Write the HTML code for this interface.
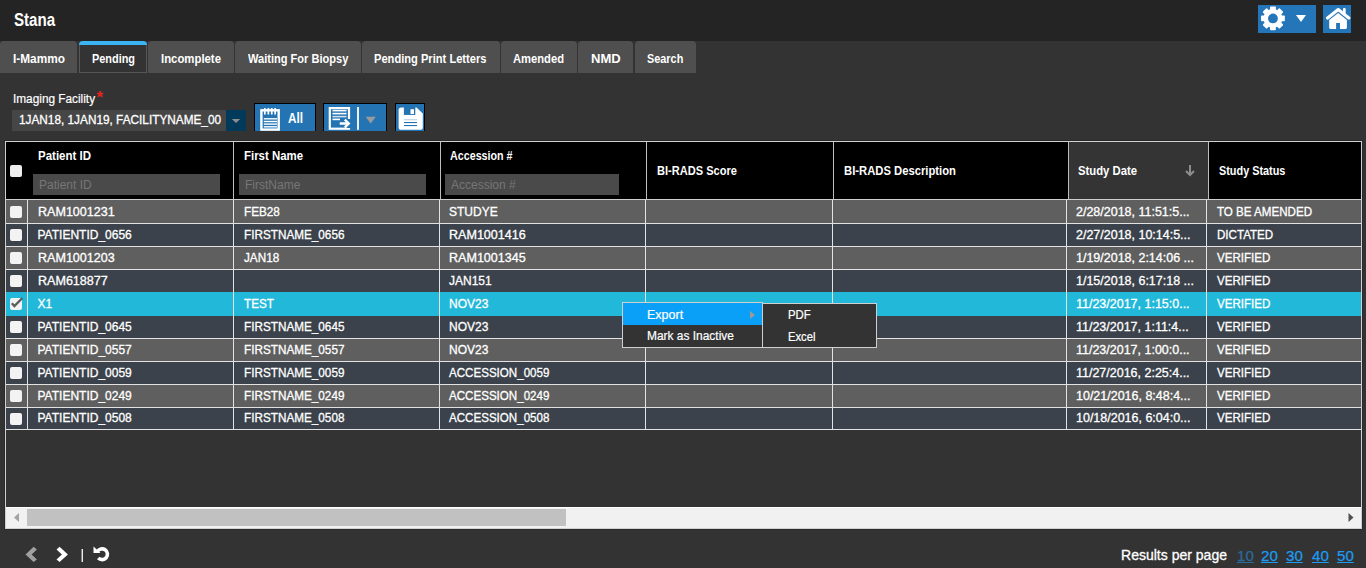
<!DOCTYPE html>
<html><head><meta charset="utf-8"><style>
html,body{margin:0;padding:0;}
body{width:1366px;height:568px;overflow:hidden;position:relative;background:#333;font-family:"Liberation Sans", sans-serif;}
</style></head><body>
<div style="position:absolute;left:0px;top:0px;width:1366px;height:41px;background:#242424;"></div>
<div style="position:absolute;left:14px;top:11.05px;font-size:18px;line-height:18px;font-weight:bold;color:#fff;white-space:nowrap;letter-spacing:0px;transform:scaleX(0.84);transform-origin:0 0;">Stana</div>
<div style="position:absolute;left:1258px;top:5px;width:58px;height:28px;background:#2576b8;"></div>
<svg style="position:absolute;left:1258px;top:5px" width="58" height="28" viewBox="0 0 58 28">
<g transform="translate(14.95,13.45)" fill="#fff">
<circle r="9.4"/><rect x="-2.9" y="-11.9" width="5.8" height="5" rx="0.8" transform="rotate(0)"/><rect x="-2.9" y="-11.9" width="5.8" height="5" rx="0.8" transform="rotate(45)"/><rect x="-2.9" y="-11.9" width="5.8" height="5" rx="0.8" transform="rotate(90)"/><rect x="-2.9" y="-11.9" width="5.8" height="5" rx="0.8" transform="rotate(135)"/><rect x="-2.9" y="-11.9" width="5.8" height="5" rx="0.8" transform="rotate(180)"/><rect x="-2.9" y="-11.9" width="5.8" height="5" rx="0.8" transform="rotate(225)"/><rect x="-2.9" y="-11.9" width="5.8" height="5" rx="0.8" transform="rotate(270)"/><rect x="-2.9" y="-11.9" width="5.8" height="5" rx="0.8" transform="rotate(315)"/>
<circle r="4.9" fill="#2576b8"/>
</g>
<path d="M38,10 h10 l-5,7 z" fill="#fff"/>
</svg>
<div style="position:absolute;left:1323px;top:5px;width:28px;height:28px;background:#2576b8;"></div>
<svg style="position:absolute;left:1323px;top:5px" width="28" height="28" viewBox="0 0 28 28">
<path d="M4.6,13 L15.2,4.6 L25.8,13" fill="none" stroke="#fff" stroke-width="3.2" stroke-linecap="round" stroke-linejoin="round"/>
<rect x="20" y="3" width="2.7" height="6" rx="1" fill="#fff"/>
<path d="M6.2,15 L15.2,7.9 L23.9,15 V22.6 A1.5,1.5 0 0 1 22.4,24.1 H17 V18 H13.1 V24.1 H7.7 A1.5,1.5 0 0 1 6.2,22.6 Z" fill="#fff"/>
</svg>
<div style="position:absolute;left:0px;top:41px;width:77px;height:32px;background:#4f4f4f;border-radius:4px 4px 0 0;"></div>
<div style="position:absolute;left:13px;top:51.99px;font-size:13.5px;line-height:13.5px;font-weight:bold;color:#fff;white-space:nowrap;letter-spacing:0px;transform:scaleX(0.8774);transform-origin:0 0;">I-Mammo</div>
<div style="position:absolute;left:79px;top:41px;width:68px;height:32px;background:#333;box-sizing:border-box;border:1px solid #575757;border-top:none;border-radius:4px 4px 0 0;"></div>
<div style="position:absolute;left:79px;top:41px;width:68px;height:4px;background:#3ab4f2;border-radius:4px 4px 0 0;"></div>
<div style="position:absolute;left:91.7px;top:51.99px;font-size:13.5px;line-height:13.5px;font-weight:bold;color:#fff;white-space:nowrap;letter-spacing:0px;transform:scaleX(0.8073);transform-origin:0 0;">Pending</div>
<div style="position:absolute;left:148px;top:41px;width:86px;height:32px;background:#4f4f4f;border-radius:4px 4px 0 0;"></div>
<div style="position:absolute;left:160.7px;top:51.99px;font-size:13.5px;line-height:13.5px;font-weight:bold;color:#fff;white-space:nowrap;letter-spacing:0px;transform:scaleX(0.8416);transform-origin:0 0;">Incomplete</div>
<div style="position:absolute;left:235px;top:41px;width:126px;height:32px;background:#4f4f4f;border-radius:4px 4px 0 0;"></div>
<div style="position:absolute;left:247.6px;top:51.99px;font-size:13.5px;line-height:13.5px;font-weight:bold;color:#fff;white-space:nowrap;letter-spacing:0px;transform:scaleX(0.8194);transform-origin:0 0;">Waiting For Biopsy</div>
<div style="position:absolute;left:362px;top:41px;width:138px;height:32px;background:#4f4f4f;border-radius:4px 4px 0 0;"></div>
<div style="position:absolute;left:374.3px;top:51.99px;font-size:13.5px;line-height:13.5px;font-weight:bold;color:#fff;white-space:nowrap;letter-spacing:0px;transform:scaleX(0.8238);transform-origin:0 0;">Pending Print Letters</div>
<div style="position:absolute;left:501px;top:41px;width:76px;height:32px;background:#4f4f4f;border-radius:4px 4px 0 0;"></div>
<div style="position:absolute;left:513px;top:51.99px;font-size:13.5px;line-height:13.5px;font-weight:bold;color:#fff;white-space:nowrap;letter-spacing:0px;transform:scaleX(0.8288);transform-origin:0 0;">Amended</div>
<div style="position:absolute;left:578px;top:41px;width:55px;height:32px;background:#4f4f4f;border-radius:4px 4px 0 0;"></div>
<div style="position:absolute;left:590.5px;top:51.99px;font-size:13.5px;line-height:13.5px;font-weight:bold;color:#fff;white-space:nowrap;letter-spacing:0px;transform:scaleX(0.9659);transform-origin:0 0;">NMD</div>
<div style="position:absolute;left:635px;top:41px;width:61px;height:32px;background:#4f4f4f;border-radius:4px 4px 0 0;"></div>
<div style="position:absolute;left:647px;top:51.99px;font-size:13.5px;line-height:13.5px;font-weight:bold;color:#fff;white-space:nowrap;letter-spacing:0px;transform:scaleX(0.8058);transform-origin:0 0;">Search</div>
<div style="position:absolute;left:13px;top:92.62px;font-size:12.5px;line-height:12.5px;font-weight:normal;color:#fff;white-space:nowrap;letter-spacing:0px;transform:scaleX(0.945);transform-origin:0 0;-webkit-text-stroke:0.2px #fff;">Imaging Facility</div>
<div style="position:absolute;left:96.5px;top:88.88px;font-size:17px;line-height:17px;font-weight:bold;color:#e8241c;white-space:nowrap;letter-spacing:0px;">*</div>
<div style="position:absolute;left:12px;top:110px;width:214px;height:21px;background:#464646;"></div>
<div style="position:absolute;left:19px;top:114.43px;font-size:12px;line-height:12px;font-weight:normal;color:#fff;white-space:nowrap;letter-spacing:0px;transform:scaleX(0.9836);transform-origin:0 0;-webkit-text-stroke:0.3px #fff;">1JAN18, 1JAN19, FACILITYNAME_00</div>
<div style="position:absolute;left:226px;top:110px;width:20px;height:21px;background:#013a5a;"></div>
<svg style="position:absolute;left:226px;top:110px" width="20" height="21"><path d="M5.8,9 h8.4 l-4.2,4 z" fill="#8e8e8e"/></svg>
<div style="position:absolute;left:254px;top:103px;width:62px;height:28px;background:#2473b2;box-sizing:border-box;border:1px solid #000;border-bottom:none;"></div>
<svg style="position:absolute;left:254px;top:103px" width="62" height="28">
<rect x="7.4" y="7.3" width="17.3" height="19.3" fill="none" stroke="#fff" stroke-width="2.4"/>
<g fill="#fff"><rect x="10" y="5" width="1.7" height="6.5"/><rect x="13.5" y="5" width="1.7" height="6.5"/><rect x="16.9" y="5" width="1.7" height="6.5"/><rect x="20.3" y="5" width="1.7" height="6.5"/>
<rect x="9.8" y="15.1" width="13.2" height="1.4"/><rect x="9.8" y="17.8" width="13.2" height="1.4"/><rect x="9.8" y="20.4" width="13.2" height="1.4"/><rect x="9.8" y="23.1" width="13.2" height="1.4"/></g>
</svg>
<div style="position:absolute;left:288px;top:110.97px;font-size:14px;line-height:14px;font-weight:bold;color:#fff;white-space:nowrap;letter-spacing:0px;transform:scaleX(0.84);transform-origin:0 0;">All</div>
<div style="position:absolute;left:323px;top:103px;width:64px;height:28px;background:#2473b2;box-sizing:border-box;border:1px solid #000;border-bottom:none;"></div>
<svg style="position:absolute;left:323px;top:103px" width="64" height="28">
<rect x="6.8" y="5.1" width="19.2" height="20.6" fill="none" stroke="#fff" stroke-width="2.2"/>
<g fill="#fff"><rect x="9.5" y="6.8" width="14" height="1.6"/><rect x="9.5" y="9.8" width="14" height="1.6"/><rect x="9.5" y="12.8" width="14" height="1.6" fill="#cfe0ee"/><rect x="9.5" y="15.6" width="7.5" height="1.6"/></g>
<rect x="24" y="16" width="4" height="9" fill="#2473b2"/>
<path d="M16.7,20.5 h8.5 M21.8,16.6 l4,3.9 -4,3.9" fill="none" stroke="#fff" stroke-width="2.3"/>
<rect x="34.1" y="4" width="1.8" height="22.8" fill="#fff"/>
<path d="M42.6,13.8 h10.2 l-5.1,6.6 z" fill="#9a9a9a"/>
</svg>
<div style="position:absolute;left:395px;top:103px;width:30px;height:28px;background:#2473b2;box-sizing:border-box;border:1px solid #000;border-bottom:none;"></div>
<svg style="position:absolute;left:395px;top:103px" width="30" height="28">
<path d="M3.6,7 A2.6,2.6 0 0 1 6.2,4.4 H21.5 L27.8,10.5 V24.2 A2.6,2.6 0 0 1 25.2,26.8 H6.2 A2.6,2.6 0 0 1 3.6,24.2 Z" fill="#fff"/>
<rect x="8.9" y="3" width="11.4" height="8.9" fill="#2473b2"/>
<rect x="15.5" y="6.2" width="3.5" height="4.8" fill="#fff"/>
<rect x="8.9" y="16.2" width="13.2" height="1.1" fill="#b9cfe4"/><rect x="8.9" y="19" width="13.2" height="1.1" fill="#2473b2"/><rect x="8.9" y="22" width="13.2" height="1.1" fill="#2473b2"/>
</svg>
<div style="position:absolute;left:4px;top:140px;width:1359px;height:390px;background:#2a2a2a;"></div>
<div style="position:absolute;left:5px;top:141px;width:1357px;height:388px;background:#333;box-sizing:border-box;border:1px solid #d0d0d0;"></div>
<div style="position:absolute;left:6px;top:142px;width:1355px;height:57px;background:#000;"></div>
<div style="position:absolute;left:1069px;top:142px;width:139px;height:57px;background:#343434;"></div>
<div style="position:absolute;left:6px;top:199px;width:1355px;height:1px;background:#cfcfcf;"></div>
<div style="position:absolute;left:233px;top:142px;width:1px;height:57px;background:#bdbdbd;"></div>
<div style="position:absolute;left:440px;top:142px;width:1px;height:57px;background:#bdbdbd;"></div>
<div style="position:absolute;left:646px;top:142px;width:1px;height:57px;background:#bdbdbd;"></div>
<div style="position:absolute;left:833px;top:142px;width:1px;height:57px;background:#bdbdbd;"></div>
<div style="position:absolute;left:1068px;top:142px;width:1px;height:57px;background:#bdbdbd;"></div>
<div style="position:absolute;left:1208px;top:142px;width:1px;height:57px;background:#bdbdbd;"></div>
<div style="position:absolute;left:10px;top:165px;width:12px;height:12px;background:#ededed;border-radius:2px;"></div>
<div style="position:absolute;left:38px;top:150.12px;font-size:12.5px;line-height:12.5px;font-weight:bold;color:#fff;white-space:nowrap;letter-spacing:0px;transform:scaleX(0.9195);transform-origin:0 0;">Patient ID</div>
<div style="position:absolute;left:243.5px;top:150.12px;font-size:12.5px;line-height:12.5px;font-weight:bold;color:#fff;white-space:nowrap;letter-spacing:0px;transform:scaleX(0.9134);transform-origin:0 0;">First Name</div>
<div style="position:absolute;left:450px;top:150.12px;font-size:12.5px;line-height:12.5px;font-weight:bold;color:#fff;white-space:nowrap;letter-spacing:0px;transform:scaleX(0.8579);transform-origin:0 0;">Accession #</div>
<div style="position:absolute;left:656.5px;top:165.22px;font-size:12.5px;line-height:12.5px;font-weight:bold;color:#fff;white-space:nowrap;letter-spacing:0px;transform:scaleX(0.8858);transform-origin:0 0;">BI-RADS Score</div>
<div style="position:absolute;left:844px;top:165.22px;font-size:12.5px;line-height:12.5px;font-weight:bold;color:#fff;white-space:nowrap;letter-spacing:0px;transform:scaleX(0.9008);transform-origin:0 0;">BI-RADS Description</div>
<div style="position:absolute;left:1078px;top:165.22px;font-size:12.5px;line-height:12.5px;font-weight:bold;color:#fff;white-space:nowrap;letter-spacing:0px;transform:scaleX(0.9036);transform-origin:0 0;">Study Date</div>
<div style="position:absolute;left:1218.5px;top:165.22px;font-size:12.5px;line-height:12.5px;font-weight:bold;color:#fff;white-space:nowrap;letter-spacing:0px;transform:scaleX(0.869);transform-origin:0 0;">Study Status</div>
<div style="position:absolute;left:33px;top:174px;width:187px;height:21px;background:#4a4a4a;"></div>
<div style="position:absolute;left:39px;top:178.83px;font-size:12px;line-height:12px;font-weight:normal;color:#767676;white-space:nowrap;letter-spacing:0px;">Patient ID</div>
<div style="position:absolute;left:239px;top:174px;width:187px;height:21px;background:#4a4a4a;"></div>
<div style="position:absolute;left:245px;top:178.83px;font-size:12px;line-height:12px;font-weight:normal;color:#767676;white-space:nowrap;letter-spacing:0px;">FirstName</div>
<div style="position:absolute;left:445px;top:174px;width:174px;height:21px;background:#4a4a4a;"></div>
<div style="position:absolute;left:451px;top:178.83px;font-size:12px;line-height:12px;font-weight:normal;color:#767676;white-space:nowrap;letter-spacing:0px;">Accession #</div>
<svg style="position:absolute;left:1184px;top:163px" width="12" height="15"><path d="M6,2 v10 M2,8 l4,4 4,-4" fill="none" stroke="#8c8c8c" stroke-width="2"/></svg>
<div style="position:absolute;left:6px;top:200px;width:1355px;height:23px;background:#5f5f5f;"></div>
<div style="position:absolute;left:6px;top:223px;width:1355px;height:1px;background:#e2e2e2;"></div>
<div style="position:absolute;left:10px;top:206px;width:12px;height:12px;background:#f3f3f3;border-radius:2px;"></div>
<div style="position:absolute;left:37.5px;top:206.33px;font-size:12px;line-height:12px;font-weight:normal;color:#fff;white-space:nowrap;letter-spacing:0px;transform:scaleX(1.046);transform-origin:0 0;-webkit-text-stroke:0.3px #fff;">RAM1001231</div>
<div style="position:absolute;left:243.5px;top:206.33px;font-size:12px;line-height:12px;font-weight:normal;color:#fff;white-space:nowrap;letter-spacing:0px;transform:scaleX(0.978);transform-origin:0 0;-webkit-text-stroke:0.3px #fff;">FEB28</div>
<div style="position:absolute;left:449px;top:206.33px;font-size:12px;line-height:12px;font-weight:normal;color:#fff;white-space:nowrap;letter-spacing:0px;-webkit-text-stroke:0.3px #fff;">STUDYE</div>
<div style="position:absolute;left:1076px;top:206.33px;font-size:12px;line-height:12px;font-weight:normal;color:#fff;white-space:nowrap;letter-spacing:0px;transform:scaleX(1.04);transform-origin:0 0;-webkit-text-stroke:0.3px #fff;">2/28/2018, 11:51:5...</div>
<div style="position:absolute;left:1216.5px;top:206.33px;font-size:12px;line-height:12px;font-weight:normal;color:#fff;white-space:nowrap;letter-spacing:0px;transform:scaleX(0.965);transform-origin:0 0;-webkit-text-stroke:0.3px #fff;">TO BE AMENDED</div>
<div style="position:absolute;left:6px;top:224px;width:1355px;height:22px;background:#3b424b;"></div>
<div style="position:absolute;left:6px;top:246px;width:1355px;height:1px;background:#e2e2e2;"></div>
<div style="position:absolute;left:10px;top:229px;width:12px;height:12px;background:#f3f3f3;border-radius:2px;"></div>
<div style="position:absolute;left:37.5px;top:229.23px;font-size:12px;line-height:12px;font-weight:normal;color:#fff;white-space:nowrap;letter-spacing:0px;-webkit-text-stroke:0.3px #fff;">PATIENTID_0656</div>
<div style="position:absolute;left:243.5px;top:229.23px;font-size:12px;line-height:12px;font-weight:normal;color:#fff;white-space:nowrap;letter-spacing:0px;transform:scaleX(0.978);transform-origin:0 0;-webkit-text-stroke:0.3px #fff;">FIRSTNAME_0656</div>
<div style="position:absolute;left:449px;top:229.23px;font-size:12px;line-height:12px;font-weight:normal;color:#fff;white-space:nowrap;letter-spacing:0px;transform:scaleX(1.046);transform-origin:0 0;-webkit-text-stroke:0.3px #fff;">RAM1001416</div>
<div style="position:absolute;left:1076px;top:229.23px;font-size:12px;line-height:12px;font-weight:normal;color:#fff;white-space:nowrap;letter-spacing:0px;transform:scaleX(1.04);transform-origin:0 0;-webkit-text-stroke:0.3px #fff;">2/27/2018, 10:14:5...</div>
<div style="position:absolute;left:1216.5px;top:229.23px;font-size:12px;line-height:12px;font-weight:normal;color:#fff;white-space:nowrap;letter-spacing:0px;transform:scaleX(0.965);transform-origin:0 0;-webkit-text-stroke:0.3px #fff;">DICTATED</div>
<div style="position:absolute;left:6px;top:247px;width:1355px;height:22px;background:#5f5f5f;"></div>
<div style="position:absolute;left:6px;top:269px;width:1355px;height:1px;background:#e2e2e2;"></div>
<div style="position:absolute;left:10px;top:252px;width:12px;height:12px;background:#f3f3f3;border-radius:2px;"></div>
<div style="position:absolute;left:37.5px;top:252.13px;font-size:12px;line-height:12px;font-weight:normal;color:#fff;white-space:nowrap;letter-spacing:0px;transform:scaleX(1.046);transform-origin:0 0;-webkit-text-stroke:0.3px #fff;">RAM1001203</div>
<div style="position:absolute;left:243.5px;top:252.13px;font-size:12px;line-height:12px;font-weight:normal;color:#fff;white-space:nowrap;letter-spacing:0px;transform:scaleX(0.978);transform-origin:0 0;-webkit-text-stroke:0.3px #fff;">JAN18</div>
<div style="position:absolute;left:449px;top:252.13px;font-size:12px;line-height:12px;font-weight:normal;color:#fff;white-space:nowrap;letter-spacing:0px;transform:scaleX(1.046);transform-origin:0 0;-webkit-text-stroke:0.3px #fff;">RAM1001345</div>
<div style="position:absolute;left:1076px;top:252.13px;font-size:12px;line-height:12px;font-weight:normal;color:#fff;white-space:nowrap;letter-spacing:0px;transform:scaleX(1.04);transform-origin:0 0;-webkit-text-stroke:0.3px #fff;">1/19/2018, 2:14:06 ...</div>
<div style="position:absolute;left:1216.5px;top:252.13px;font-size:12px;line-height:12px;font-weight:normal;color:#fff;white-space:nowrap;letter-spacing:0px;transform:scaleX(0.965);transform-origin:0 0;-webkit-text-stroke:0.3px #fff;">VERIFIED</div>
<div style="position:absolute;left:6px;top:270px;width:1355px;height:22px;background:#3b424b;"></div>
<div style="position:absolute;left:10px;top:275px;width:12px;height:12px;background:#f3f3f3;border-radius:2px;"></div>
<div style="position:absolute;left:37.5px;top:275.03px;font-size:12px;line-height:12px;font-weight:normal;color:#fff;white-space:nowrap;letter-spacing:0px;transform:scaleX(1.046);transform-origin:0 0;-webkit-text-stroke:0.3px #fff;">RAM618877</div>
<div style="position:absolute;left:243.5px;top:275.03px;font-size:12px;line-height:12px;font-weight:normal;color:#fff;white-space:nowrap;letter-spacing:0px;transform:scaleX(0.978);transform-origin:0 0;-webkit-text-stroke:0.3px #fff;"></div>
<div style="position:absolute;left:449px;top:275.03px;font-size:12px;line-height:12px;font-weight:normal;color:#fff;white-space:nowrap;letter-spacing:0px;-webkit-text-stroke:0.3px #fff;">JAN151</div>
<div style="position:absolute;left:1076px;top:275.03px;font-size:12px;line-height:12px;font-weight:normal;color:#fff;white-space:nowrap;letter-spacing:0px;transform:scaleX(1.04);transform-origin:0 0;-webkit-text-stroke:0.3px #fff;">1/15/2018, 6:17:18 ...</div>
<div style="position:absolute;left:1216.5px;top:275.03px;font-size:12px;line-height:12px;font-weight:normal;color:#fff;white-space:nowrap;letter-spacing:0px;transform:scaleX(0.965);transform-origin:0 0;-webkit-text-stroke:0.3px #fff;">VERIFIED</div>
<div style="position:absolute;left:6px;top:293px;width:1355px;height:22px;background:#22b8d9;"></div>
<div style="position:absolute;left:10px;top:298px;width:12px;height:12px;background:#f3f3f3;border-radius:2px;"></div>
<svg style="position:absolute;left:10px;top:296px" width="14" height="14"><path d="M1.8,7.3 L4.4,10 L12.4,2" fill="none" stroke="#5c5c5c" stroke-width="2.3"/></svg>
<div style="position:absolute;left:37.5px;top:297.93px;font-size:12px;line-height:12px;font-weight:normal;color:#fff;white-space:nowrap;letter-spacing:0px;-webkit-text-stroke:0.3px #fff;">X1</div>
<div style="position:absolute;left:243.5px;top:297.93px;font-size:12px;line-height:12px;font-weight:normal;color:#fff;white-space:nowrap;letter-spacing:0px;transform:scaleX(0.978);transform-origin:0 0;-webkit-text-stroke:0.3px #fff;">TEST</div>
<div style="position:absolute;left:449px;top:297.93px;font-size:12px;line-height:12px;font-weight:normal;color:#fff;white-space:nowrap;letter-spacing:0px;-webkit-text-stroke:0.3px #fff;">NOV23</div>
<div style="position:absolute;left:1076px;top:297.93px;font-size:12px;line-height:12px;font-weight:normal;color:#fff;white-space:nowrap;letter-spacing:0px;transform:scaleX(1.04);transform-origin:0 0;-webkit-text-stroke:0.3px #fff;">11/23/2017, 1:15:0...</div>
<div style="position:absolute;left:1216.5px;top:297.93px;font-size:12px;line-height:12px;font-weight:normal;color:#fff;white-space:nowrap;letter-spacing:0px;transform:scaleX(0.965);transform-origin:0 0;-webkit-text-stroke:0.3px #fff;">VERIFIED</div>
<div style="position:absolute;left:6px;top:316px;width:1355px;height:22px;background:#3b424b;"></div>
<div style="position:absolute;left:6px;top:338px;width:1355px;height:1px;background:#e2e2e2;"></div>
<div style="position:absolute;left:10px;top:321px;width:12px;height:12px;background:#f3f3f3;border-radius:2px;"></div>
<div style="position:absolute;left:37.5px;top:320.83px;font-size:12px;line-height:12px;font-weight:normal;color:#fff;white-space:nowrap;letter-spacing:0px;-webkit-text-stroke:0.3px #fff;">PATIENTID_0645</div>
<div style="position:absolute;left:243.5px;top:320.83px;font-size:12px;line-height:12px;font-weight:normal;color:#fff;white-space:nowrap;letter-spacing:0px;transform:scaleX(0.978);transform-origin:0 0;-webkit-text-stroke:0.3px #fff;">FIRSTNAME_0645</div>
<div style="position:absolute;left:449px;top:320.83px;font-size:12px;line-height:12px;font-weight:normal;color:#fff;white-space:nowrap;letter-spacing:0px;-webkit-text-stroke:0.3px #fff;">NOV23</div>
<div style="position:absolute;left:1076px;top:320.83px;font-size:12px;line-height:12px;font-weight:normal;color:#fff;white-space:nowrap;letter-spacing:0px;transform:scaleX(1.04);transform-origin:0 0;-webkit-text-stroke:0.3px #fff;">11/23/2017, 1:11:4...</div>
<div style="position:absolute;left:1216.5px;top:320.83px;font-size:12px;line-height:12px;font-weight:normal;color:#fff;white-space:nowrap;letter-spacing:0px;transform:scaleX(0.965);transform-origin:0 0;-webkit-text-stroke:0.3px #fff;">VERIFIED</div>
<div style="position:absolute;left:6px;top:339px;width:1355px;height:22px;background:#5f5f5f;"></div>
<div style="position:absolute;left:6px;top:361px;width:1355px;height:1px;background:#e2e2e2;"></div>
<div style="position:absolute;left:10px;top:344px;width:12px;height:12px;background:#f3f3f3;border-radius:2px;"></div>
<div style="position:absolute;left:37.5px;top:343.73px;font-size:12px;line-height:12px;font-weight:normal;color:#fff;white-space:nowrap;letter-spacing:0px;-webkit-text-stroke:0.3px #fff;">PATIENTID_0557</div>
<div style="position:absolute;left:243.5px;top:343.73px;font-size:12px;line-height:12px;font-weight:normal;color:#fff;white-space:nowrap;letter-spacing:0px;transform:scaleX(0.978);transform-origin:0 0;-webkit-text-stroke:0.3px #fff;">FIRSTNAME_0557</div>
<div style="position:absolute;left:449px;top:343.73px;font-size:12px;line-height:12px;font-weight:normal;color:#fff;white-space:nowrap;letter-spacing:0px;-webkit-text-stroke:0.3px #fff;">NOV23</div>
<div style="position:absolute;left:1076px;top:343.73px;font-size:12px;line-height:12px;font-weight:normal;color:#fff;white-space:nowrap;letter-spacing:0px;transform:scaleX(1.04);transform-origin:0 0;-webkit-text-stroke:0.3px #fff;">11/23/2017, 1:00:0...</div>
<div style="position:absolute;left:1216.5px;top:343.73px;font-size:12px;line-height:12px;font-weight:normal;color:#fff;white-space:nowrap;letter-spacing:0px;transform:scaleX(0.965);transform-origin:0 0;-webkit-text-stroke:0.3px #fff;">VERIFIED</div>
<div style="position:absolute;left:6px;top:362px;width:1355px;height:22px;background:#3b424b;"></div>
<div style="position:absolute;left:6px;top:384px;width:1355px;height:1px;background:#e2e2e2;"></div>
<div style="position:absolute;left:10px;top:367px;width:12px;height:12px;background:#f3f3f3;border-radius:2px;"></div>
<div style="position:absolute;left:37.5px;top:366.63px;font-size:12px;line-height:12px;font-weight:normal;color:#fff;white-space:nowrap;letter-spacing:0px;-webkit-text-stroke:0.3px #fff;">PATIENTID_0059</div>
<div style="position:absolute;left:243.5px;top:366.63px;font-size:12px;line-height:12px;font-weight:normal;color:#fff;white-space:nowrap;letter-spacing:0px;transform:scaleX(0.978);transform-origin:0 0;-webkit-text-stroke:0.3px #fff;">FIRSTNAME_0059</div>
<div style="position:absolute;left:449px;top:366.63px;font-size:12px;line-height:12px;font-weight:normal;color:#fff;white-space:nowrap;letter-spacing:0px;transform:scaleX(0.965);transform-origin:0 0;-webkit-text-stroke:0.3px #fff;">ACCESSION_0059</div>
<div style="position:absolute;left:1076px;top:366.63px;font-size:12px;line-height:12px;font-weight:normal;color:#fff;white-space:nowrap;letter-spacing:0px;transform:scaleX(1.04);transform-origin:0 0;-webkit-text-stroke:0.3px #fff;">11/27/2016, 2:25:4...</div>
<div style="position:absolute;left:1216.5px;top:366.63px;font-size:12px;line-height:12px;font-weight:normal;color:#fff;white-space:nowrap;letter-spacing:0px;transform:scaleX(0.965);transform-origin:0 0;-webkit-text-stroke:0.3px #fff;">VERIFIED</div>
<div style="position:absolute;left:6px;top:385px;width:1355px;height:22px;background:#5f5f5f;"></div>
<div style="position:absolute;left:6px;top:407px;width:1355px;height:1px;background:#e2e2e2;"></div>
<div style="position:absolute;left:10px;top:390px;width:12px;height:12px;background:#f3f3f3;border-radius:2px;"></div>
<div style="position:absolute;left:37.5px;top:389.53px;font-size:12px;line-height:12px;font-weight:normal;color:#fff;white-space:nowrap;letter-spacing:0px;-webkit-text-stroke:0.3px #fff;">PATIENTID_0249</div>
<div style="position:absolute;left:243.5px;top:389.53px;font-size:12px;line-height:12px;font-weight:normal;color:#fff;white-space:nowrap;letter-spacing:0px;transform:scaleX(0.978);transform-origin:0 0;-webkit-text-stroke:0.3px #fff;">FIRSTNAME_0249</div>
<div style="position:absolute;left:449px;top:389.53px;font-size:12px;line-height:12px;font-weight:normal;color:#fff;white-space:nowrap;letter-spacing:0px;transform:scaleX(0.965);transform-origin:0 0;-webkit-text-stroke:0.3px #fff;">ACCESSION_0249</div>
<div style="position:absolute;left:1076px;top:389.53px;font-size:12px;line-height:12px;font-weight:normal;color:#fff;white-space:nowrap;letter-spacing:0px;transform:scaleX(1.04);transform-origin:0 0;-webkit-text-stroke:0.3px #fff;">10/21/2016, 8:48:4...</div>
<div style="position:absolute;left:1216.5px;top:389.53px;font-size:12px;line-height:12px;font-weight:normal;color:#fff;white-space:nowrap;letter-spacing:0px;transform:scaleX(0.965);transform-origin:0 0;-webkit-text-stroke:0.3px #fff;">VERIFIED</div>
<div style="position:absolute;left:6px;top:408px;width:1355px;height:21px;background:#3b424b;"></div>
<div style="position:absolute;left:6px;top:429px;width:1355px;height:1px;background:#e2e2e2;"></div>
<div style="position:absolute;left:10px;top:413px;width:12px;height:12px;background:#f3f3f3;border-radius:2px;"></div>
<div style="position:absolute;left:37.5px;top:412.43px;font-size:12px;line-height:12px;font-weight:normal;color:#fff;white-space:nowrap;letter-spacing:0px;-webkit-text-stroke:0.3px #fff;">PATIENTID_0508</div>
<div style="position:absolute;left:243.5px;top:412.43px;font-size:12px;line-height:12px;font-weight:normal;color:#fff;white-space:nowrap;letter-spacing:0px;transform:scaleX(0.978);transform-origin:0 0;-webkit-text-stroke:0.3px #fff;">FIRSTNAME_0508</div>
<div style="position:absolute;left:449px;top:412.43px;font-size:12px;line-height:12px;font-weight:normal;color:#fff;white-space:nowrap;letter-spacing:0px;transform:scaleX(0.965);transform-origin:0 0;-webkit-text-stroke:0.3px #fff;">ACCESSION_0508</div>
<div style="position:absolute;left:1076px;top:412.43px;font-size:12px;line-height:12px;font-weight:normal;color:#fff;white-space:nowrap;letter-spacing:0px;transform:scaleX(1.04);transform-origin:0 0;-webkit-text-stroke:0.3px #fff;">10/18/2016, 6:04:0...</div>
<div style="position:absolute;left:1216.5px;top:412.43px;font-size:12px;line-height:12px;font-weight:normal;color:#fff;white-space:nowrap;letter-spacing:0px;transform:scaleX(0.965);transform-origin:0 0;-webkit-text-stroke:0.3px #fff;">VERIFIED</div>
<div style="position:absolute;left:6px;top:429px;width:1355px;height:1px;background:#e2e2e2;"></div>
<div style="position:absolute;left:6px;top:292px;width:1355px;height:1px;background:#22b8d9;"></div>
<div style="position:absolute;left:6px;top:315px;width:1355px;height:1px;background:#22b8d9;"></div>
<div style="position:absolute;left:27px;top:200px;width:1px;height:230px;background:#e2e2e2;"></div>
<div style="position:absolute;left:233px;top:200px;width:1px;height:230px;background:#e2e2e2;"></div>
<div style="position:absolute;left:439px;top:200px;width:1px;height:230px;background:#e2e2e2;"></div>
<div style="position:absolute;left:645px;top:200px;width:1px;height:230px;background:#e2e2e2;"></div>
<div style="position:absolute;left:832px;top:200px;width:1px;height:230px;background:#e2e2e2;"></div>
<div style="position:absolute;left:1066px;top:200px;width:1px;height:230px;background:#e2e2e2;"></div>
<div style="position:absolute;left:1206px;top:200px;width:1px;height:230px;background:#e2e2e2;"></div>
<div style="position:absolute;left:6px;top:507px;width:1355px;height:21px;background:#f1f1f1;border-top:1px solid #fff;box-sizing:border-box;"></div>
<div style="position:absolute;left:27px;top:509px;width:539px;height:17px;background:#c1c1c1;"></div>
<svg style="position:absolute;left:12px;top:511px" width="10" height="13"><path d="M7,2 v9 l-5,-4.5 z" fill="#a3a3a3"/></svg>
<svg style="position:absolute;left:1346px;top:511px" width="10" height="13"><path d="M2.5,2 v9 l5,-4.5 z" fill="#505050"/></svg>
<svg style="position:absolute;left:20px;top:542px" width="100" height="26">
<path d="M5.5,12.5 L13.6,4.7 L16.9,7.6 L11.7,12.5 L16.9,17.5 L13.6,20 Z" fill="#a0a0a0"/>
<path d="M36.5,7.4 L39.6,4.7 L47.9,12.5 L39.6,20 L36.5,17.5 L41.9,12.5 Z" fill="#fff"/>
<rect x="61.6" y="7" width="1.3" height="13" fill="#fff"/>
<path d="M77.37,9.55 A5.4,5.4 0 1 1 78.23,16.07" fill="none" stroke="#fff" stroke-width="3.6"/>
<path d="M73.5,4.6 V11 H80.5 Z" fill="#fff"/>
</svg>
<div style="position:absolute;left:1121px;top:548.46px;font-size:14.5px;line-height:14.5px;font-weight:normal;color:#fff;white-space:nowrap;letter-spacing:0px;transform:scaleX(0.967);transform-origin:0 0;-webkit-text-stroke:0.3px #fff;">Results per page</div>
<div style="position:absolute;left:1236.5px;top:547.93px;font-size:15.5px;line-height:15.5px;font-weight:normal;color:#2a6b9c;white-space:nowrap;letter-spacing:0px;transform:scaleX(0.9739);transform-origin:0 0;text-decoration:underline;-webkit-text-stroke:0.25px #2a6b9c;">10</div>
<div style="position:absolute;left:1261px;top:547.93px;font-size:15.5px;line-height:15.5px;font-weight:normal;color:#1b9cf2;white-space:nowrap;letter-spacing:0px;transform:scaleX(0.9739);transform-origin:0 0;text-decoration:underline;-webkit-text-stroke:0.25px #1b9cf2;">20</div>
<div style="position:absolute;left:1286px;top:547.93px;font-size:15.5px;line-height:15.5px;font-weight:normal;color:#1b9cf2;white-space:nowrap;letter-spacing:0px;transform:scaleX(0.9739);transform-origin:0 0;text-decoration:underline;-webkit-text-stroke:0.25px #1b9cf2;">30</div>
<div style="position:absolute;left:1311.5px;top:547.93px;font-size:15.5px;line-height:15.5px;font-weight:normal;color:#1b9cf2;white-space:nowrap;letter-spacing:0px;transform:scaleX(0.9739);transform-origin:0 0;text-decoration:underline;-webkit-text-stroke:0.25px #1b9cf2;">40</div>
<div style="position:absolute;left:1337px;top:547.93px;font-size:15.5px;line-height:15.5px;font-weight:normal;color:#1b9cf2;white-space:nowrap;letter-spacing:0px;transform:scaleX(0.9739);transform-origin:0 0;text-decoration:underline;-webkit-text-stroke:0.25px #1b9cf2;">50</div>
<div style="position:absolute;left:622px;top:302px;width:141px;height:46px;background:#333;box-sizing:border-box;border:1px solid #cfcfcf;"></div>
<div style="position:absolute;left:623px;top:303px;width:139px;height:22px;background:#0ba0f8;"></div>
<div style="position:absolute;left:647px;top:308.62px;font-size:12.5px;line-height:12.5px;font-weight:normal;color:#fff;white-space:nowrap;letter-spacing:0px;-webkit-text-stroke:0.2px #fff;">Export</div>
<svg style="position:absolute;left:748px;top:309px" width="10" height="12"><path d="M2,2 v8 l5,-4 z" fill="#9a9a9a"/></svg>
<div style="position:absolute;left:647px;top:329.62px;font-size:12.5px;line-height:12.5px;font-weight:normal;color:#fff;white-space:nowrap;letter-spacing:0px;transform:scaleX(0.955);transform-origin:0 0;-webkit-text-stroke:0.2px #fff;">Mark as Inactive</div>
<div style="position:absolute;left:762px;top:303px;width:115px;height:45px;background:#333;box-sizing:border-box;border:1px solid #cfcfcf;"></div>
<div style="position:absolute;left:787.7px;top:309.03px;font-size:12px;line-height:12px;font-weight:normal;color:#fff;white-space:nowrap;letter-spacing:0px;transform:scaleX(0.9458);transform-origin:0 0;-webkit-text-stroke:0.2px #fff;">PDF</div>
<div style="position:absolute;left:787.7px;top:331.03px;font-size:12px;line-height:12px;font-weight:normal;color:#fff;white-space:nowrap;letter-spacing:0px;transform:scaleX(0.9372);transform-origin:0 0;-webkit-text-stroke:0.2px #fff;">Excel</div>
</body></html>
